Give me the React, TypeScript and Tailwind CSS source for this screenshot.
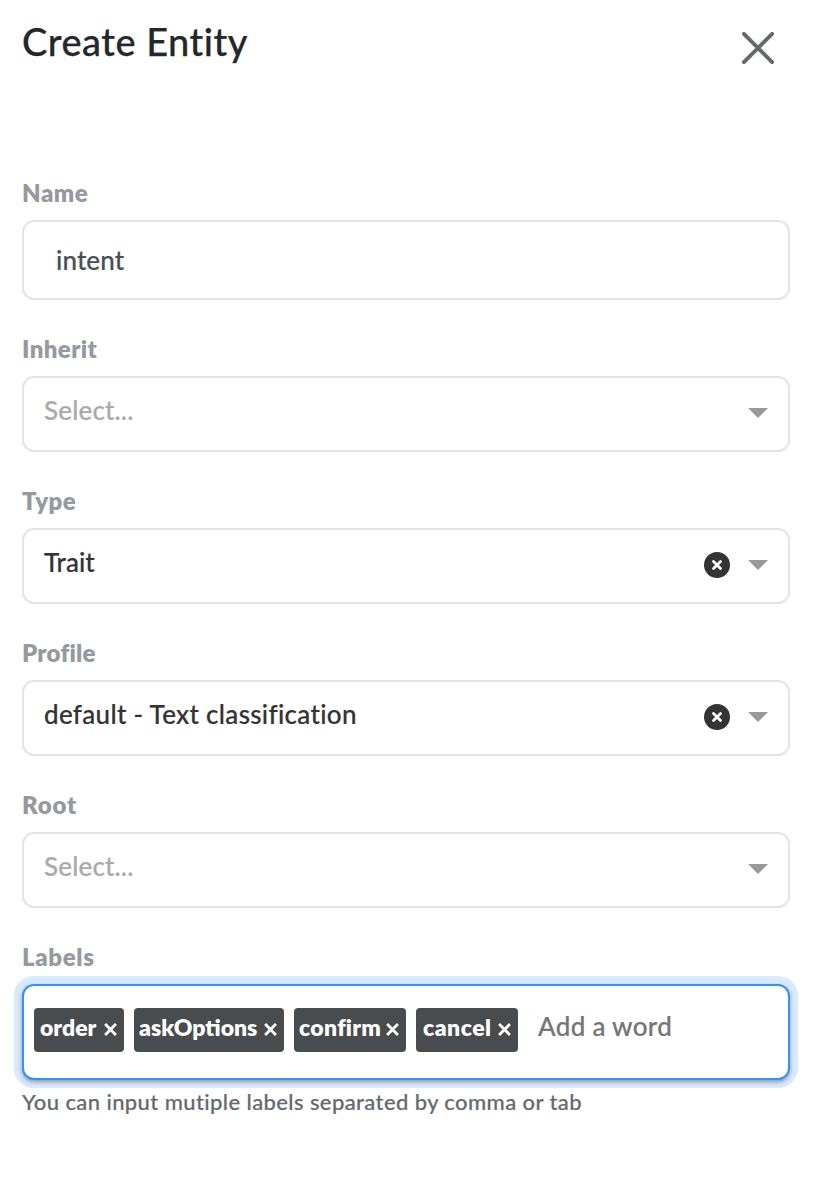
import type { ReactNode } from 'react';

function Field({ label, spacing, children }: { label: string; spacing: string; children: ReactNode }) {
  return (
    <section className="flex flex-col gap-[10px]">
      <label className="h-9 pt-px text-2xl leading-9 font-extrabold text-[#949a9e]">
        <span className={spacing}>{label}</span>
      </label>
      {children}
    </section>
  );
}

function Select({ value, spacing }: { value?: string; spacing: string }) {
  return (
    <div className="flex h-[76px] items-start justify-between rounded-[12px] border-2 border-[#e1e5e9] pr-5 pl-5">
      <span className={`text-[26px] leading-[65px] font-medium [-webkit-text-stroke:0.2px] ${spacing} ${value ? 'text-[#333333]' : 'text-[#aaaaaa]'}`}>
        {value ?? 'Select...'}
      </span>
      <div className="flex h-[70px] items-center gap-[18px]">
        {value && (
          <svg width="26" height="26" viewBox="0 0 26 26" aria-hidden="true">
            <circle cx="13" cy="13" r="13" fill="#333" />
            <path d="M9.5 9.5L16.5 16.5M16.5 9.5L9.5 16.5" stroke="#fff" strokeWidth="2.8" strokeLinecap="round" />
          </svg>
        )}
        <svg width="20" height="10" viewBox="0 0 20 10" aria-hidden="true">
          <path d="M0 0H20L10 10Z" fill="#999" />
        </svg>
      </div>
    </div>
  );
}

const tags = [
  { name: 'order', width: 'w-[90px] pl-[6px]', spacing: 'tracking-[0px]' },
  { name: 'askOptions', width: 'w-[150px] pl-[5px]', spacing: 'tracking-[0px]' },
  { name: 'confirm', width: 'w-[112px] pl-[5px]', spacing: 'tracking-[0.3px]' },
  { name: 'cancel', width: 'w-[102px] pl-[7px]', spacing: 'tracking-[0.5px]' },
];

export default function App() {
  return (
    <main className="h-[1188px] w-[828px] bg-white pt-[17px] pr-[38px] pl-[22px] font-['Lato','Open_Sans',sans-serif]">
      <header className="flex h-[157px] items-start justify-between pr-4">
        <h1 className="text-[38px] leading-[48px] font-medium tracking-[0.5px] text-[#24282c] [-webkit-text-stroke:0.25px]">Create Entity</h1>
        <button aria-label="Close" className="mt-[15px]">
          <svg width="32" height="32" viewBox="0 0 32 32" aria-hidden="true">
            <path d="M1.9 1.9L30.1 30.1M30.1 1.9L1.9 30.1" stroke="#65696c" strokeWidth="3.9" strokeLinecap="round" />
          </svg>
        </button>
      </header>
      <div className="flex flex-col gap-[30px]">
        <Field label="Name" spacing="tracking-[0.5px]">
          <div className="h-20 rounded-[12px] border-2 border-[#e1e5e9] pl-8 text-[26px] leading-[77px] font-medium tracking-[0.1px] text-[#495057] [-webkit-text-stroke:0.2px]">intent</div>
        </Field>
        <Field label="Inherit" spacing="tracking-[0.4px]"><Select spacing="tracking-[0.15px]" /></Field>
        <Field label="Type" spacing="tracking-[0.5px]"><Select value="Trait" spacing="tracking-[0px]" /></Field>
        <Field label="Profile" spacing="tracking-[0.25px]"><Select value="default - Text classification" spacing="tracking-[0.31px]" /></Field>
        <Field label="Root" spacing="tracking-[0.8px]"><Select spacing="tracking-[0.15px]" /></Field>
        <div>
          <Field label="Labels" spacing="tracking-[0.65px]">
            <div className="flex h-24 items-start gap-[10px] rounded-[12px] border-2 border-[#3490fa] bg-white px-[10px] pt-[22px] shadow-[0_2px_4px_rgba(0,0,0,0.35),0_0_0_8px_#d9eafe]">
              {tags.map((tag) => (
                <div key={tag.name} className={`flex h-11 items-start justify-between rounded-[4px] bg-[#494c4f] pr-[7px] text-[23px] leading-[39px] font-extrabold text-white ${tag.width}`}>
                  <span className={tag.spacing}>{tag.name}</span>
                  <svg className="mt-[15px]" width="13" height="13" viewBox="0 0 13 13" aria-hidden="true">
                    <path d="M1.1 1.1L11.9 11.9M11.9 1.1L1.1 11.9" stroke="#fff" strokeWidth="2.8" />
                  </svg>
                </div>
              ))}
              <span className="ml-[10px] text-[26px] leading-[37px] font-medium tracking-[0.3px] text-[#757575] [-webkit-text-stroke:0.2px]">Add a word</span>
            </div>
          </Field>
          <p className="mt-[7px] text-[22px] leading-[30px] font-medium tracking-[0.4px] whitespace-nowrap text-[#666a6e] [-webkit-text-stroke:0.2px]">You can input mutiple labels separated by comma or tab</p>
        </div>
      </div>
    </main>
  );
}
